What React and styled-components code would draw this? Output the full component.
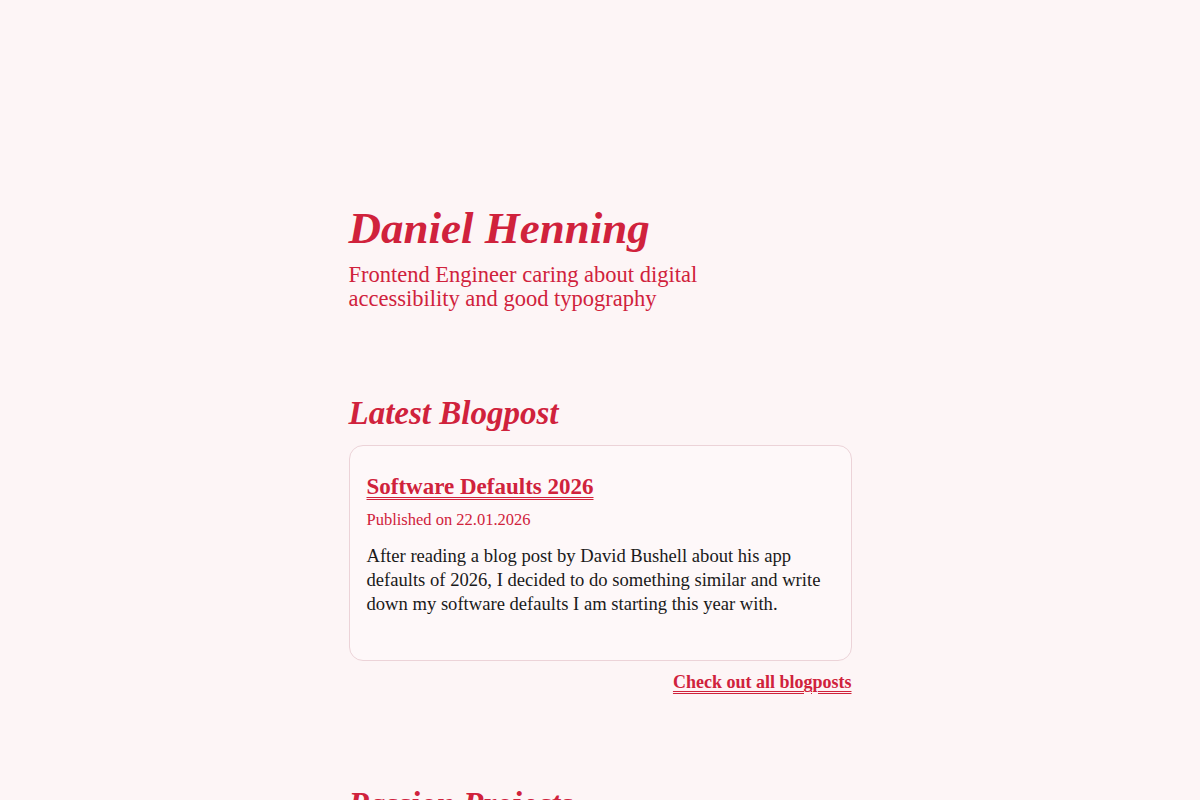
import styled, { createGlobalStyle } from 'styled-components';

const GlobalStyle = createGlobalStyle`
    html, body {
        margin: 0;
        padding: 0;
        background: #fdf5f6;
    }
    body {
        font-family: 'Liberation Serif', 'DejaVu Serif', serif;
        color: #1a1a1a;
    }
`;

const accent = '#d0223c';

const Page = styled.main`
    width: 503px;
    margin: 0 auto;
    padding: 204px 0 0 0;
`;

const Header = styled.header`
    margin-bottom: 84px;
`;

const Name = styled.h1`
    margin: 0 0 11px 0;
    font-size: 45px;
    line-height: 48px;
    font-style: italic;
    font-weight: 700;
    color: ${accent};
`;

const Tagline = styled.p`
    margin: 0;
    max-width: 400px;
    font-size: 22.5px;
    line-height: 24px;
    color: ${accent};
`;

const Section = styled.section`
    margin-bottom: 93px;
`;

const SectionTitle = styled.h2`
    margin: 0 0 14px 0;
    font-size: 33px;
    line-height: 36px;
    font-style: italic;
    font-weight: 700;
    color: ${accent};
`;

const Card = styled.article`
    box-sizing: border-box;
    height: 216px;
    padding: 28px 17px;
    border: 1px solid #ecd3d8;
    border-radius: 14px;
    background: #fef8f9;
`;

const Link = styled.a`
    color: ${accent};
    font-weight: 700;
    text-decoration: underline double ${accent};
    text-decoration-thickness: 1px;
    text-underline-offset: 3px;
`;

const PostTitle = styled.h3`
    margin: 0 0 10px 0;
    font-size: 23px;
    line-height: 26px;
`;

const Meta = styled.p`
    margin: 0 0 14px 0;
    font-size: 16.5px;
    line-height: 20px;
    color: ${accent};
`;

const Excerpt = styled.p`
    margin: 0;
    font-size: 18.6px;
    line-height: 24px;
    color: #1a1a1a;
`;

const More = styled.div`
    display: flex;
    justify-content: flex-end;
    margin-top: 10px;
    font-size: 18px;
    line-height: 22px;
`;

export default function App() {
    return (
        <>
            <GlobalStyle />
            <Page>
                <Header>
                    <Name>Daniel Henning</Name>
                    <Tagline>Frontend Engineer caring about digital accessibility and good typography</Tagline>
                </Header>
                <Section>
                    <SectionTitle>Latest Blogpost</SectionTitle>
                    <Card>
                        <PostTitle><Link href="#">Software Defaults 2026</Link></PostTitle>
                        <Meta>Published on 22.01.2026</Meta>
                        <Excerpt>
                            After reading a blog post by David Bushell about his app defaults of 2026, I decided to do something similar and write down my software defaults I am starting this year with.
                        </Excerpt>
                    </Card>
                    <More><Link href="#">Check out all blogposts</Link></More>
                </Section>
                <Section>
                    <SectionTitle>Passion Projects</SectionTitle>
                </Section>
            </Page>
        </>
    );
}
